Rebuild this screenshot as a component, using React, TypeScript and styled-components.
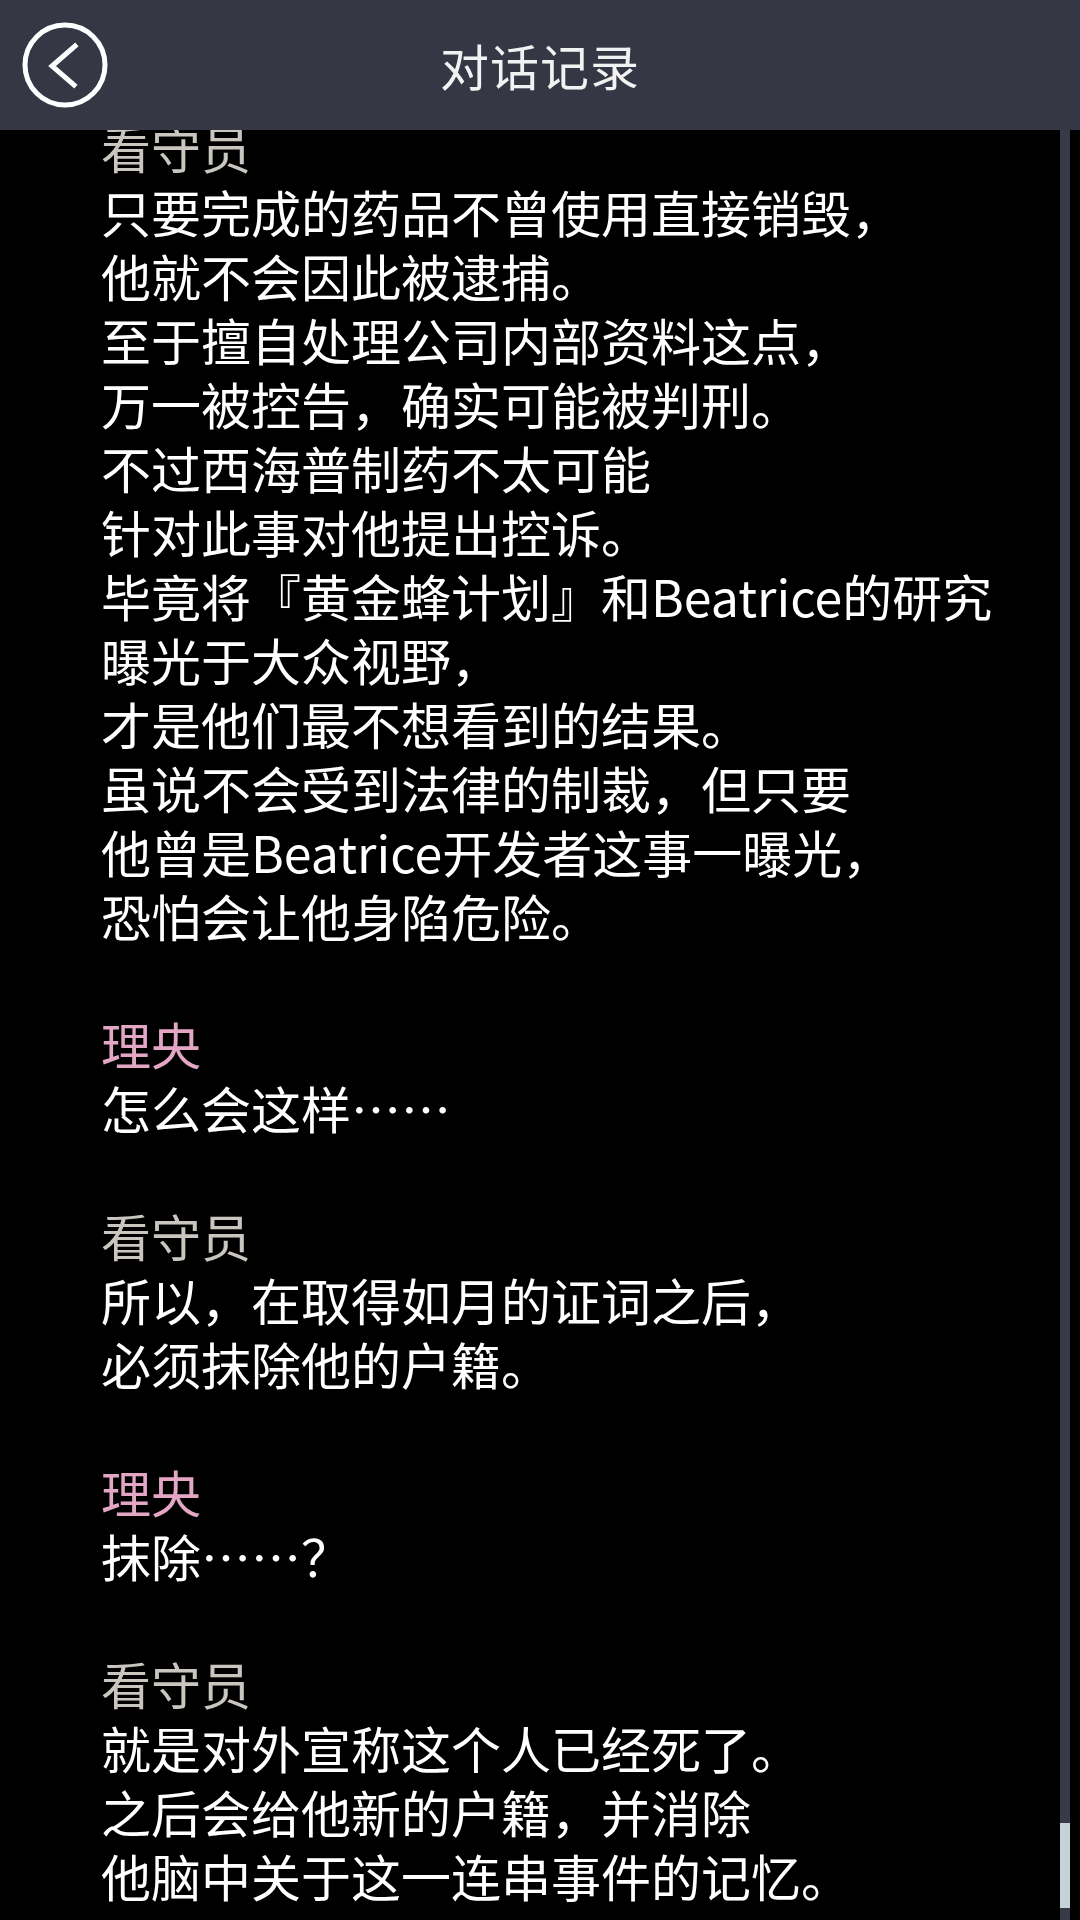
import styled, { createGlobalStyle } from 'styled-components';

const GlobalStyle = createGlobalStyle`
   html, body {
      margin: 0;
      padding: 0;
      background: #000;
   }
`;

type Speaker = 'guard' | 'rio';

interface Entry {
   speaker: Speaker;
   name: string;
   lines: string[];
}

const log: Entry[] = [
   {
      speaker: 'guard',
      name: '看守员',
      lines: [
         '只要完成的药品不曾使用直接销毁，',
         '他就不会因此被逮捕。',
         '至于擅自处理公司内部资料这点，',
         '万一被控告，确实可能被判刑。',
         '不过西海普制药不太可能',
         '针对此事对他提出控诉。',
         '毕竟将『黄金蜂计划』和Beatrice的研究',
         '曝光于大众视野，',
         '才是他们最不想看到的结果。',
         '虽说不会受到法律的制裁，但只要',
         '他曾是Beatrice开发者这事一曝光，',
         '恐怕会让他身陷危险。',
      ],
   },
   { speaker: 'rio', name: '理央', lines: ['怎么会这样……'] },
   {
      speaker: 'guard',
      name: '看守员',
      lines: ['所以，在取得如月的证词之后，', '必须抹除他的户籍。'],
   },
   { speaker: 'rio', name: '理央', lines: ['抹除……？'] },
   {
      speaker: 'guard',
      name: '看守员',
      lines: [
         '就是对外宣称这个人已经死了。',
         '之后会给他新的户籍，并消除',
         '他脑中关于这一连串事件的记忆。',
      ],
   },
];

const BackIcon = () => (
   <svg width="92" height="92" viewBox="0 0 92 92">
      <circle cx="46" cy="46" r="40" fill="none" stroke="#fff" strokeWidth="5" />
      <polyline points="56,27 33,47 55,66" fill="none" stroke="#fff" strokeWidth="5" strokeLinecap="square" />
   </svg>
);

export default function App() {

   return (
      <Screen>
         <GlobalStyle />
         <Header>
            <BackButton><BackIcon /></BackButton>
            <Title>对话记录</Title>
         </Header>
         <Body>
            <Scroller>
               <Log>
                  {log.map((entry, i) => (
                     <Block key={i}>
                        <Name $speaker={entry.speaker}>{entry.name}</Name>
                        {entry.lines.map((line, j) => (
                           <Line key={j}>{line}</Line>
                        ))}
                     </Block>
                  ))}
               </Log>
            </Scroller>
            <Track>
               <Thumb />
            </Track>
         </Body>
      </Screen>
   );

}

const Screen = styled.div`
   width: 1080px;
   height: 1920px;
   display: flex;
   flex-direction: column;
   background: #000;
   overflow: hidden;
   font-family: 'Noto Sans CJK SC', 'Noto Sans', sans-serif;
`;

const Header = styled.header`
   position: relative;
   z-index: 2;
   flex: 0 0 130px;
   display: flex;
   align-items: center;
   justify-content: center;
   background: #353744;
`;

const BackButton = styled.div`
   position: absolute;
   left: 19px;
   top: 19px;
   width: 92px;
   height: 92px;
   display: flex;
`;

const Title = styled.h1`
   margin: 0 0 2px 0;
   font-size: 49px;
   font-weight: 400;
   color: #f2f2f2;
   letter-spacing: 1px;
`;

const Body = styled.main`
   flex: 1;
   display: flex;
   min-height: 0;
`;

const Scroller = styled.div`
   flex: 1;
   overflow: hidden;
`;

const Log = styled.div`
   margin-top: -15px;
   padding-left: 101px;
   display: flex;
   flex-direction: column;
   gap: 64px;
   font-size: 50px;
   line-height: 64px;
`;

const Block = styled.section`
   display: flex;
   flex-direction: column;
`;

const Name = styled.div<{ $speaker: Speaker }>`
   color: ${p => (p.$speaker === 'rio' ? '#e3a6c4' : '#c9c5bf')};
   white-space: nowrap;
`;

const Line = styled.div`
   color: #fff;
   white-space: nowrap;
`;

const Track = styled.div`
   flex: 0 0 10px;
   margin-right: 10px;
   display: flex;
   flex-direction: column;
   justify-content: flex-end;
   padding-bottom: 12px;
   background: #383a48;
`;

const Thumb = styled.div`
   height: 85px;
   background: #c3d3d7;
`;
